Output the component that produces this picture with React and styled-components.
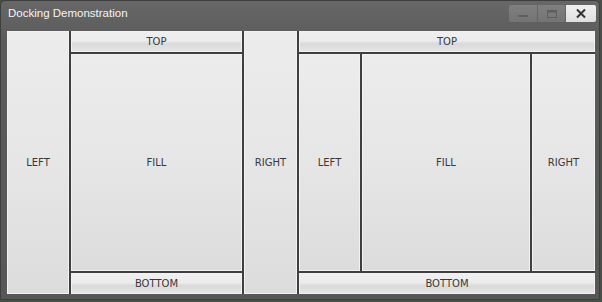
import React from 'react';
import styled, { createGlobalStyle } from 'styled-components';

const GlobalStyle = createGlobalStyle`
  html, body {
    margin: 0;
    padding: 0;
    background: #465046;
  }
  body {
    width: 602px;
    height: 302px;
    overflow: hidden;
  }
`;

const Window = styled.div`
  width: 600px;
  height: 300px;
  box-sizing: border-box;
  background: linear-gradient(#676767, #5b5b5b 40px, #575757);
  border: 1px solid #3e3e3e;
  border-radius: 5px 5px 2px 2px;
  display: flex;
  flex-direction: column;
`;

const TitleBar = styled.div`
  height: 29px;
  display: flex;
  align-items: flex-start;
  justify-content: space-between;
  padding: 0 3px 0 7px;
`;

const Title = styled.span`
  margin-top: 6px;
  color: #f4f4f4;
  font-family: 'Liberation Sans', Arial, sans-serif;
  font-size: 11.5px;
`;

const Controls = styled.div`
  display: flex;
  gap: 1px;
  margin-top: 4px;
`;

const CtrlButton = styled.div`
  width: ${(p) => p.$w}px;
  height: 17px;
  display: flex;
  align-items: center;
  justify-content: center;
  background: ${(p) => (p.$close ? 'linear-gradient(#f0f0f0, #dedede)' : 'linear-gradient(#7f7f7f, #747474)')};
  border-radius: ${(p) => (p.$close ? '0 2px 2px 0' : '0')};
  &:first-child {
    border-radius: 2px 0 0 2px;
  }
`;

const Frame = styled.div`
  flex: 1;
  display: flex;
  padding: 1px 4px 5px 6px;
`;

const Dock = styled.div`
  flex: 1;
  display: flex;
  gap: 2px;
  background: #3f3f3f;
`;

const Column = styled.div`
  display: flex;
  flex-direction: column;
  gap: 2px;
  width: ${(p) => (p.$w ? `${p.$w}px` : 'auto')};
  flex: ${(p) => (p.$w ? 'none' : '1')};
`;

const Row = styled.div`
  flex: 1;
  display: flex;
  gap: 2px;
`;

const Panel = styled.div`
  display: flex;
  align-items: center;
  justify-content: center;
  box-sizing: border-box;
  font-family: 'DejaVu Sans', Verdana, sans-serif;
  font-size: 10px;
  color: #383838;
  border: 1px solid #f2f2f2;
  flex: ${(p) => (p.$w || p.$h ? 'none' : '1')};
  width: ${(p) => (p.$w ? `${p.$w}px` : 'auto')};
  height: ${(p) => (p.$h ? `${p.$h}px` : 'auto')};
  background: ${(p) =>
    p.$bar
      ? 'linear-gradient(#efefef 0%, #ececec 45%, #dadada 62%, #e4e4e4 100%)'
      : 'linear-gradient(#ececec, #e6e6e6 50%, #dcdcdc)'};
`;

const MinIcon = () => (
  <svg width="12" height="10" viewBox="0 0 12 10">
    <rect x="1" y="6" width="10" height="2" fill="#5f5f5f" />
  </svg>
);

const MaxIcon = () => (
  <svg width="12" height="10" viewBox="0 0 12 10">
    <rect x="1.5" y="1.5" width="9" height="7" fill="none" stroke="#5f5f5f" strokeWidth="1" />
    <rect x="1.5" y="1.5" width="9" height="2" fill="#5f5f5f" />
  </svg>
);

const CloseIcon = () => (
  <svg width="12" height="11" viewBox="0 0 12 11">
    <path d="M2 1.5 L10 9.5 M10 1.5 L2 9.5" stroke="#333" strokeWidth="2" />
  </svg>
);

const App = () => (
  <>
    <GlobalStyle />
    <Window>
      <TitleBar>
        <Title>Docking Demonstration</Title>
        <Controls>
          <CtrlButton $w={28}><MinIcon /></CtrlButton>
          <CtrlButton $w={27}><MaxIcon /></CtrlButton>
          <CtrlButton $w={30} $close><CloseIcon /></CtrlButton>
        </Controls>
      </TitleBar>
      <Frame>
        <Dock>
          <Panel $w={62}>LEFT</Panel>
          <Column $w={171}>
            <Panel $bar $h={21}>TOP</Panel>
            <Panel>FILL</Panel>
            <Panel $bar $h={21}>BOTTOM</Panel>
          </Column>
          <Panel $w={53}>RIGHT</Panel>
          <Column>
            <Panel $bar $h={21}>TOP</Panel>
            <Row>
              <Panel $w={61}>LEFT</Panel>
              <Panel>FILL</Panel>
              <Panel $w={63}>RIGHT</Panel>
            </Row>
            <Panel $bar $h={21}>BOTTOM</Panel>
          </Column>
        </Dock>
      </Frame>
    </Window>
  </>
);

export default App;
